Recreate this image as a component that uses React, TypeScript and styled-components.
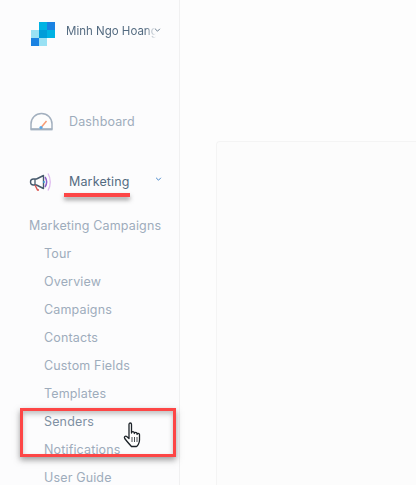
import React from "react";
import styled, { createGlobalStyle } from "styled-components";

const Global = createGlobalStyle`
  html, body { margin: 0; padding: 0; height: 100%; background: #fdfdfd; overflow: hidden; }
  body { font-family: Inter, "Liberation Sans", sans-serif; }
`;

const Page = styled.div`
  position: relative;
  display: flex;
  width: 416px;
  height: 485px;
  overflow: hidden;
  background: #fdfdfd;
`;

const Sidebar = styled.nav`
  width: 179px;
  flex: none;
  border-right: 1px solid #f0f0f1;
  background: #fcfcfd;
  padding-top: 22px;
  height: 463px;
`;

const Account = styled.div`
  display: flex;
  align-items: flex-start;
  height: 24px;
  padding-left: 31px;
`;

const AccountName = styled.span`
  width: 90px;
  margin-left: 11px;
  font-size: 11.5px;
  line-height: 18px;
  color: #546b81;
  white-space: nowrap;
  overflow: hidden;
  -webkit-mask-image: linear-gradient(to right, #000 88%, transparent 100%);
  mask-image: linear-gradient(to right, #000 88%, transparent 100%);
`;

const Chevron = styled.svg`
  width: 7px;
  height: 4px;
  flex: none;
  fill: none;
  stroke: ${(p) => p.color};
  stroke-width: 1.1;
`;

const AccountChevron = styled(Chevron)`
  margin: 6px 0 0 -2px;
`;

const MainItem = styled.div<{ $top: number }>`
  display: flex;
  align-items: center;
  height: 24px;
  margin-top: ${(p) => p.$top}px;
  padding-left: 29px;
`;

const ItemIcon = styled.svg`
  width: 24px;
  height: 24px;
  flex: none;
  fill: none;
`;

const ItemLabel = styled.span<{ $active?: boolean }>`
  margin-left: 16px;
  width: 86px;
  font-size: 12.5px;
  letter-spacing: 0.15px;
  color: ${(p) => (p.$active ? "#546b81" : "#9eacbc")};
`;

const MarketingChevron = styled(Chevron)`
  margin: -4px 0 0 0;
`;

const SubList = styled.div`
  display: flex;
  flex-direction: column;
  margin-top: 19px;
`;

const SubHead = styled.div`
  height: 28px;
  line-height: 28px;
  padding-left: 29px;
  font-size: 12.5px;
  letter-spacing: 0.15px;
  color: #9eacbc;
  white-space: nowrap;
`;

const SubItem = styled(SubHead)<{ $hover?: boolean }>`
  padding-left: 44px;
  color: ${(p) => (p.$hover ? "#7f90a3" : "#9eacbc")};
`;

const Main = styled.main`
  flex: 1;
  padding: 141px 0 0 36px;
`;

const Card = styled.div`
  height: 344px;
  border-top: 1px solid #f4f4f4;
  border-left: 1px solid #f4f4f4;
  border-top-left-radius: 4px;
  background: #fcfcfc;
`;

const Underline = styled.div`
  position: absolute;
  left: 64px;
  top: 193px;
  width: 66px;
  height: 4px;
  background: #fd4646;
  box-shadow: 0 3px 4px rgba(60, 60, 60, 0.5);
`;

const Highlight = styled.div`
  position: absolute;
  left: 20px;
  top: 408px;
  width: 150px;
  height: 43px;
  border: 3px solid #fd4646;
  box-shadow: 0 3px 6px rgba(60, 60, 60, 0.5), inset 0 3px 5px rgba(60, 60, 60, 0.3);
`;

const Cursor = styled.svg`
  position: absolute;
  left: 123px;
  top: 422px;
  width: 20px;
  height: 26px;
`;

const items = ["Tour", "Overview", "Campaigns", "Contacts", "Custom Fields", "Templates", "Senders", "Notifications", "User Guide"];

export default function App() {
  return (
    <Page>
      <Global />
      <Sidebar>
        <Account>
          <svg width="24" height="24" viewBox="0 0 24 24">
            <rect x="8" y="0" width="8" height="8" fill="#00b2e3" />
            <rect x="16" y="0" width="8" height="8" fill="#1a82e2" />
            <rect x="0" y="8" width="8" height="8" fill="#99e1f4" />
            <rect x="8" y="8" width="8" height="8" fill="#009dd9" />
            <rect x="16" y="8" width="8" height="8" fill="#00b2e3" />
            <rect x="0" y="16" width="8" height="8" fill="#1a82e2" />
            <rect x="8" y="16" width="8" height="8" fill="#99e1f4" />
          </svg>
          <AccountName>Minh Ngo Hoang</AccountName>
          <AccountChevron viewBox="0 0 8 5" color="#546b81"><path d="M1 1l3 3 3-3" /></AccountChevron>
        </Account>
        <MainItem $top={63}>
          <ItemIcon viewBox="0 0 24 24">
            <path d="M2 20v-5a10.500 10.500 0 0 1 21 0v5z" fill="#fdfdfd" stroke="#a3b0bf" strokeWidth="1.5" strokeLinejoin="round" />
            <path d="M1.500 20.500h22" stroke="#a3b0bf" strokeWidth="1.800" />
            <path d="M5.500 15v.1M8 10.500v.1M12.500 8v.1M17 10v.1M20 14v.1" stroke="#f6cf5e" strokeWidth="1.500" />
            <path d="M12.500 18l5-6" stroke="#f69a73" strokeWidth="1.500" />
            <circle cx="12" cy="18.500" r="1.600" fill="#58a6e6" />
          </ItemIcon>
          <ItemLabel>Dashboard</ItemLabel>
        </MainItem>
        <MainItem $top={36}>
          <ItemIcon viewBox="0 0 24 24">
            <path d="M4.500 10h3l7-3.500v13l-7-3.500h-3a2.500 2.500 0 0 1 0-6z" fill="#fdfdfd" stroke="#475a6d" strokeWidth="1.400" strokeLinejoin="round" />
            <path d="M6 10v6" stroke="#475a6d" strokeWidth="1.300" />
            <path d="M6 16l2.500 5h1.500" stroke="#d9534f" strokeWidth="1.400" />
            <path d="M16 8c2 3 2 7 0 10" stroke="#8b5fc8" strokeWidth="1.500" />
            <path d="M19 4.500c3 5 3 12 0 17" stroke="#ddb8ee" strokeWidth="1.300" />
            <circle cx="15" cy="13" r="1" fill="#3b9fe0" />
          </ItemIcon>
          <ItemLabel $active>Marketing</ItemLabel>
          <MarketingChevron viewBox="0 0 8 5" color="#2f78c4"><path d="M1 1l3 3 3-3" /></MarketingChevron>
        </MainItem>
        <SubList>
          <SubHead>Marketing Campaigns</SubHead>
          {items.map((t) => (
            <SubItem key={t} $hover={t === "Senders"}>{t}</SubItem>
          ))}
        </SubList>
      </Sidebar>
      <Main>
        <Card />
      </Main>
      <Underline />
      <Highlight />
      <Cursor viewBox="0 0 20 26">
        <path d="M6 2.500c0-2 2.500-2 2.500 0V11c.2-1.800 2.600-1.800 2.800 0v.5c.2-1.600 2.500-1.600 2.700 0v.8c.3-1.300 2.300-1.300 2.500.3V18c0 3-2 6-3 6.500H8.500c-1.800-2-5-5.500-6.800-8-1-1.500.8-3 2-2L6 16.500z" fill="#fff" stroke="#1c2228" strokeWidth="1.300" strokeLinejoin="round" />
        <path d="M9 15v5M11.500 15v5M14 15v5" stroke="#1c2228" strokeWidth="0.800" />
      </Cursor>
    </Page>
  );
}
